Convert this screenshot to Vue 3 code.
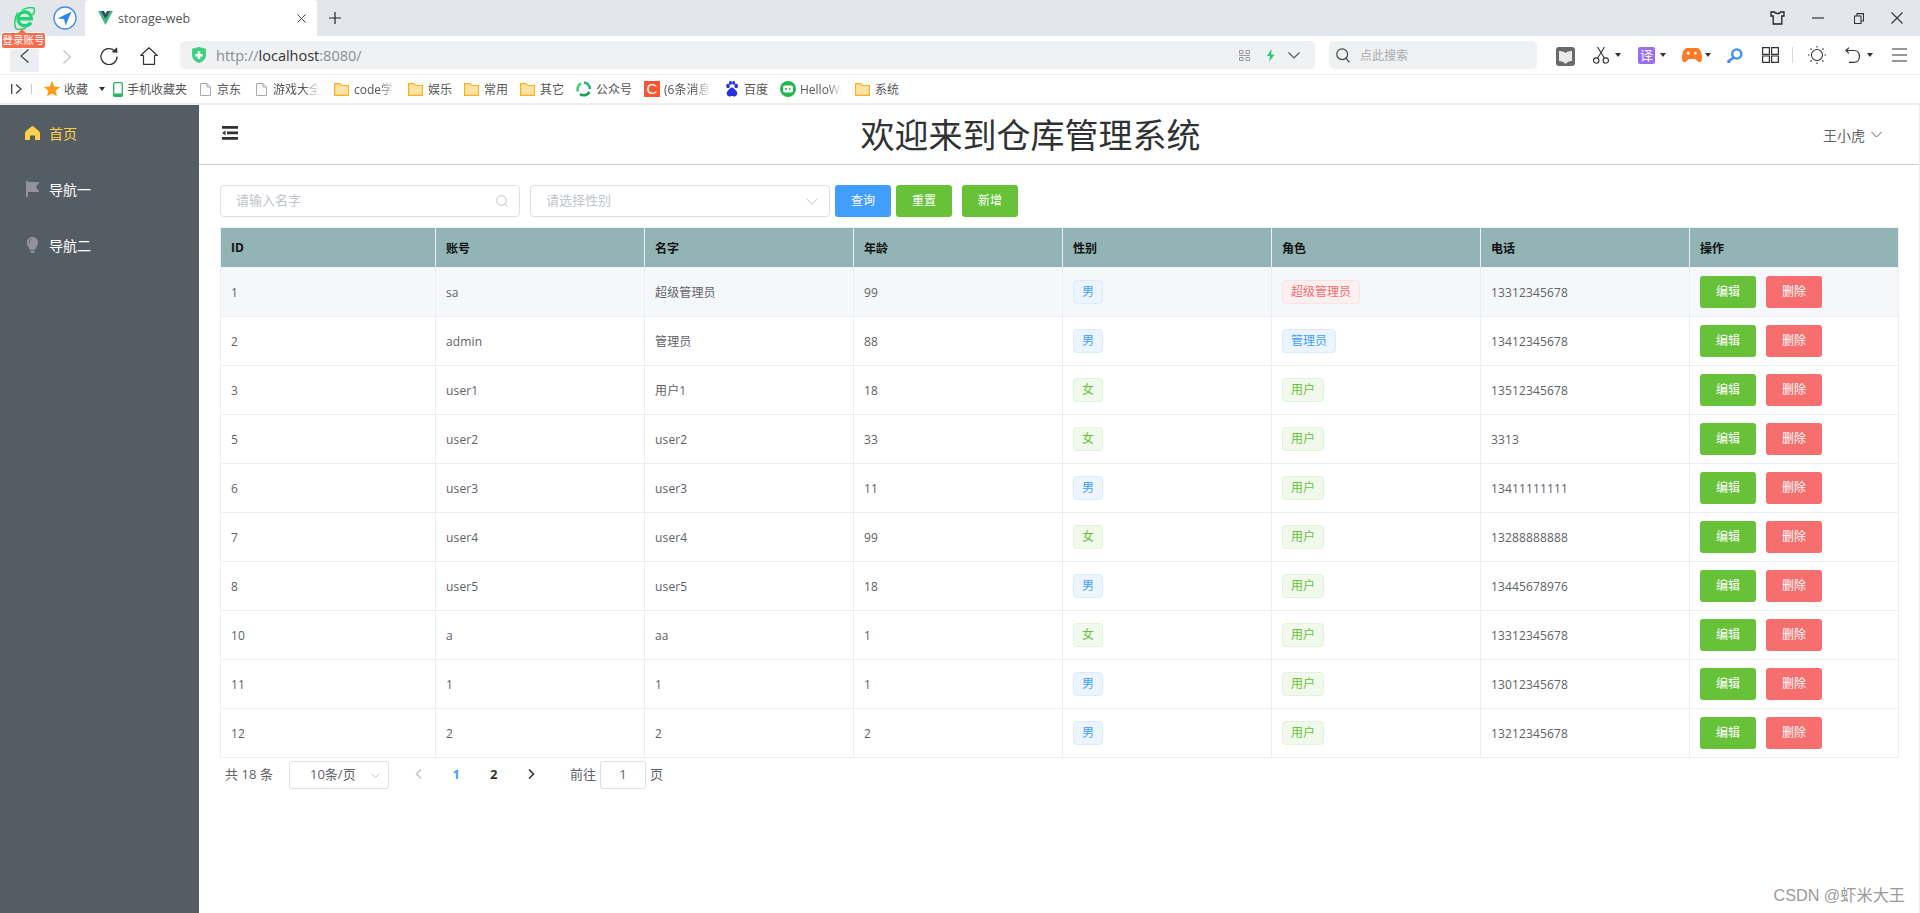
<script setup>
const bookmarks = [
  { kind: 'star', text: '收藏', w: 69, caret: true },
  { kind: 'phone', text: '手机收藏夹', w: 87 },
  { kind: 'doc', text: '京东', w: 56 },
  { kind: 'doc', text: '游戏大全', w: 78, clip: 47 },
  { kind: 'folder', text: 'code学习', w: 74, clip: 41 },
  { kind: 'folder', text: '娱乐', w: 56 },
  { kind: 'folder', text: '常用', w: 56 },
  { kind: 'folder', text: '其它', w: 56 },
  { kind: 'gzh', text: '公众号', w: 68 },
  { kind: 'csdn', text: '(6条消息', w: 81, clip: 47 },
  { kind: 'baidu', text: '百度', w: 55 },
  { kind: 'hello', text: 'HelloWorld', w: 75, clip: 42 },
  { kind: 'folder', text: '系统', w: 60 }
]
const SA = { text: '超级管理员', type: 'danger' }
const AD = { text: '管理员', type: 'primary' }
const US = { text: '用户', type: 'success' }
const rows = [
  [1, 'sa', '超级管理员', 99, '男', SA, '13312345678'],
  [2, 'admin', '管理员', 88, '男', AD, '13412345678'],
  [3, 'user1', '用户1', 18, '女', US, '13512345678'],
  [5, 'user2', 'user2', 33, '女', US, '3313'],
  [6, 'user3', 'user3', 11, '男', US, '13411111111'],
  [7, 'user4', 'user4', 99, '女', US, '13288888888'],
  [8, 'user5', 'user5', 18, '男', US, '13445678976'],
  [10, 'a', 'aa', 1, '女', US, '13312345678'],
  [11, '1', '1', 1, '男', US, '13012345678'],
  [12, '2', '2', 2, '男', US, '13212345678']
]
const columns = ['ID', '账号', '名字', '年龄', '性别', '角色', '电话', '操作']
</script>

<template>
  <div class="page">
    <div class="tabbar">
      <svg class="ie" viewBox="0 0 21 23" fill="none" stroke="#21d46f" stroke-width="3.400">
        <path d="M5 11.800H17.300C17.300 7.500 14.500 5 10.800 5C6.800 5 4 8 4 12C4 16 7 18.800 10.800 18.800C13.600 18.800 15.500 17.700 17 15.500" />
        <path d="M8 3.200C12 .8 17.500 -.2 20 1.200C21 3 20 6 18.500 8" stroke-width="1.500" />
        <path d="M3.500 5.500C.5 11 0 19 2 21.500C4 23 8 22.500 12 21" stroke-width="1.500" />
      </svg>
      <div class="login-badge">登录账号</div>
      <svg class="compass" viewBox="0 0 24 24">
        <circle cx="12" cy="12" r="11" fill="#fff" stroke="#3d8df2" stroke-width="1.3" />
        <path d="M18.500 5.500L4.500 12.500L11 13L12.500 19.500Z" fill="#2f86ee" />
      </svg>
      <div class="tab">
        <svg class="vue" viewBox="0 0 16 15">
          <path d="M0 0H6.200L8 3.200L9.800 0H16L8 15Z" fill="#41b883" />
          <path d="M3.200 0H6.200L8 3.200L9.800 0H12.800L8 8.500Z" fill="#34495e" />
        </svg>
        <span class="tab-title">storage-web</span>
        <svg class="tab-close" viewBox="0 0 9 9" fill="none" stroke="#444" stroke-width="1">
          <path d="M.5.5L8.500 8.500M8.500.5L.5 8.500" />
        </svg>
      </div>
      <svg class="plus" viewBox="0 0 12 12" fill="none" stroke="#222" stroke-width="1.2">
        <path d="M6 0V12M0 6H12" />
      </svg>
      <div class="win-controls">
        <svg class="shirt" viewBox="0 0 15 14" fill="none" stroke="#222" stroke-width="1.3">
          <path d="M4.500 1H1L1 5H3.200V13H11.800V5H14V1H10.500C10 3 5 3 4.500 1Z" />
        </svg>
        <svg class="win-min" viewBox="0 0 12 2" stroke="#333" stroke-width="1.2"><path d="M0 1H12" /></svg>
        <svg class="win-restore" viewBox="0 0 10 11" fill="none" stroke="#333" stroke-width="1.1">
          <path d="M.5 3H7V10.500H.5Z" /><path d="M3 3V.6H9.500V8H7" />
        </svg>
        <svg class="win-close" viewBox="0 0 12 12" fill="none" stroke="#333" stroke-width="1.1">
          <path d="M.5.5L11.500 11.500M11.500.5L.5 11.500" />
        </svg>
      </div>
    </div>

    <div class="toolbar">
      <div class="back">
        <svg width="9" height="14" viewBox="0 0 9 14" fill="none" stroke="#444" stroke-width="1.2"><path d="M8.500.5L1 7L8.500 13.500" /></svg>
      </div>
      <svg class="fwd" viewBox="0 0 8 14" fill="none" stroke="#c4c4c4" stroke-width="1.2"><path d="M.5.5L7.500 7L.5 13.500" /></svg>
      <svg class="reload" viewBox="0 0 18 18" fill="none" stroke="#333" stroke-width="1.3">
        <path d="M14.500 3.800A8 8 0 1 0 17 9.500" /><path d="M11.500 5.200L17.500 5.800L17 .3Z" fill="#333" stroke="none" />
      </svg>
      <svg class="home" viewBox="0 0 18 18" fill="none" stroke="#333" stroke-width="1.2" stroke-linejoin="round">
        <path d="M.7 8.500L9 .8L17.300 8.500H14.500V17.300H3.500V8.500Z" />
      </svg>
      <div class="address">
        <svg class="shield" viewBox="0 0 13 15">
          <path d="M0 1.600L6.500 0L13 1.600V8C13 11.500 9.500 14 6.500 15C3.500 14 0 11.500 0 8Z" fill="#3fd07f" />
          <path d="M5.300 4H7.700V6.500H10V8.800H7.700V11.200H5.300V8.800H3V6.500H5.300Z" fill="#fff" />
        </svg>
        <span class="url">http://<b>localhost</b>:8080/</span>
        <svg class="qr" viewBox="0 0 11 11" fill="none" stroke="#999" stroke-width="1">
          <path d="M.5.5H4V3.500H.5ZM7 .5H10.500V3.500H7ZM.5 7.500H4V10.500H.5ZM7 7.500H10.500V10.500H7ZM0 5.500H11" />
        </svg>
        <svg class="bolt" viewBox="0 0 9 13"><path d="M5.500 0L1 7H4L3 13L8.500 5.500H5.300Z" fill="#22d07a" /></svg>
        <svg class="addr-chev" viewBox="0 0 12 7" fill="none" stroke="#555" stroke-width="1.2"><path d="M.5.5L6 6L11.500.5" /></svg>
      </div>
      <div class="search">
        <svg width="14" height="15" viewBox="0 0 14 15" fill="none" stroke="#444" stroke-width="1.2">
          <circle cx="6.200" cy="6.200" r="5.400" /><path d="M10 10.200L13.400 14.400" />
        </svg>
        <span>点此搜索</span>
      </div>
      <svg class="t-book" viewBox="0 0 19 19">
        <rect width="19" height="19" rx="3" fill="#6a6a6a" />
        <path d="M3 4C5 4 8 4.500 9.500 6C11 4.500 14 4 16 4V14C13.500 14 11 15 9.500 17C8 15 5.500 14 3 14Z" fill="#e9e9e9" />
      </svg>
      <svg class="t-scissors" viewBox="0 0 16 17" fill="none" stroke="#333" stroke-width="1.1">
        <circle cx="3.200" cy="13.600" r="2.700" /><circle cx="12.800" cy="13.600" r="2.700" />
        <path d="M4.500 11.300L11.500 0M11.500 11.300L4.500 0" />
      </svg>
      <i class="caret c1"></i>
      <div class="t-trans">译</div>
      <i class="caret c2"></i>
      <svg class="t-game" viewBox="0 0 20 15">
        <path d="M5 0H15C18 0 20 5 20 10C20 14 18 15 16.500 14C15 13 14 11 12.500 11H7.500C6 11 5 13 3.500 14C2 15 0 14 0 10C0 5 2 0 5 0Z" fill="#ff7a26" />
        <path d="M4.500 5.200H8M6.250 3.500V7" stroke="#fff" stroke-width="1.300" />
        <circle cx="13.500" cy="5.200" r="1.400" fill="#fff" />
      </svg>
      <i class="caret c3"></i>
      <svg class="t-key" viewBox="0 0 17 15" fill="none" stroke="#3b8ef0" stroke-width="2.400">
        <circle cx="10.800" cy="6" r="4.600" /><path d="M7.500 9.500L1.500 14M2 13.500L4 15" />
      </svg>
      <svg class="t-grid" viewBox="0 0 17 16" fill="none" stroke="#333" stroke-width="1.200">
        <path d="M.6.6H7.400V7.400H.6ZM9.600.6H16.400V7.400H9.600ZM.6 9H7.400V15.400H.6ZM9.600 9H16.400V15.400H9.600Z" />
      </svg>
      <i class="t-div"></i>
      <svg class="t-sun" viewBox="0 0 18 18" fill="none" stroke="#333" stroke-width="1.100">
        <circle cx="9" cy="9" r="5.500" /><path d="M9 0V1.500M9 16.500V18M0 9H1.500M16.500 9H18M2.500 2.500L3.700 3.700M14.300 14.300L15.500 15.500M15.500 2.500L14.300 3.700M3.700 14.300L2.500 15.500" />
      </svg>
      <svg class="t-undo" viewBox="0 0 15 16" fill="none" stroke="#333" stroke-width="1.200">
        <path d="M1 3.500H9C12.500 3.500 14.400 6 14.400 9.500C14.400 13 12 15.400 9 15.400H4" /><path d="M4 .6L.8 3.500L4 6.400" />
      </svg>
      <i class="caret c4"></i>
      <svg class="t-menu" viewBox="0 0 15 14" stroke="#333" stroke-width="1.200"><path d="M0 1H15M0 7H15M0 13H15" /></svg>
    </div>

    <div class="bookbar">
      <svg class="bb-toggle" viewBox="0 0 11 10" fill="none" stroke="#444" stroke-width="1.300"><path d="M.7 0V10M5 .5L10 5L5 9.500" /></svg>
      <i class="bb-div"></i>
      <div v-for="b in bookmarks" :key="b.text" class="bm" :style="{ width: b.w + 'px' }">
        <svg v-if="b.kind === 'star'" class="ic-star" viewBox="0 0 16 16"><path d="M8 0L10.300 5.400L16 5.900L11.700 9.700L13 15.500L8 12.500L3 15.500L4.300 9.700L0 5.900L5.700 5.400Z" fill="#ff9a1a" /></svg>
        <svg v-else-if="b.kind === 'phone'" class="ic-phone" viewBox="0 0 10 15" fill="none">
          <rect x=".7" y=".7" width="8.600" height="13.600" rx="1" stroke="#27b45e" stroke-width="1.300" /><rect x="1" y="11.500" width="8" height="3" fill="#27b45e" />
        </svg>
        <svg v-else-if="b.kind === 'doc'" class="ic-doc" viewBox="0 0 11 13" fill="#fff" stroke="#aaa" stroke-width="1"><path d="M.5.5H7L10.500 4V12.500H.5ZM7 .5V4H10.500" /></svg>
        <svg v-else-if="b.kind === 'folder'" class="ic-folder" viewBox="0 0 15 13">
          <path d="M.6.6H6L7.500 2.500H14.400V12.400H.6Z" fill="#ffe2a6" stroke="#ffb01f" stroke-width="1.200" />
        </svg>
        <svg v-else-if="b.kind === 'gzh'" class="ic-gzh" viewBox="0 0 16 16" fill="none" stroke-width="2.600">
          <path d="M8 1.500A6.500 6.500 0 0 1 14 8" stroke="#2bb673" /><path d="M13.500 11A6.500 6.500 0 0 1 4 13" stroke="#1f9d58" /><path d="M2 10.500A6.500 6.500 0 0 1 5 2.500" stroke="#4ccb7a" />
        </svg>
        <div v-else-if="b.kind === 'csdn'" class="ic-csdn">C</div>
        <svg v-else-if="b.kind === 'baidu'" class="ic-baidu" viewBox="0 0 14 16" fill="#2932e1">
          <ellipse cx="3" cy="5" rx="1.800" ry="2.300" /><ellipse cx="5.500" cy="1.900" rx="1.600" ry="1.900" /><ellipse cx="8.700" cy="1.900" rx="1.600" ry="1.900" /><ellipse cx="11.200" cy="5" rx="1.800" ry="2.300" />
          <path d="M7 6.500C9 6.500 9.500 8.500 11 9.500C13 11 12.500 15.500 9.500 15.500C8.500 15.500 8 15 7 15C6 15 5.500 15.500 4.500 15.500C1.500 15.500 1 11 3 9.500C4.500 8.500 5 6.500 7 6.500Z" />
        </svg>
        <svg v-else-if="b.kind === 'hello'" class="ic-hello" viewBox="0 0 16 16">
          <circle cx="8" cy="8" r="8" fill="#1fb84f" /><rect x="3" y="4.500" width="10" height="7" rx="2" fill="#fff" />
          <circle cx="6" cy="8" r="1" fill="#1fb84f" /><path d="M9 6.700L11 8L9 9.300Z" fill="#1fb84f" />
        </svg>
        <span class="bm-text" :class="{ clipped: b.clip }" :style="b.clip ? { width: b.clip + 'px' } : null">{{ b.text }}</span>
        <i v-if="b.caret" class="caret bm-caret"></i>
      </div>
    </div>

    <div class="body">
      <aside class="aside">
        <div class="menu-item active">
          <svg class="menu-ic" viewBox="0 0 15 14"><path d="M7.500 0C9 1 15 5 15 7V14H10V9.500H5V14H0V7C0 5 6 1 7.500 0Z" fill="#ffd04b" /></svg>
          <span>首页</span>
        </div>
        <div class="menu-item">
          <svg class="menu-ic" viewBox="0 0 15 16"><path d="M1 0H3V16H1ZM3 1H14.500L11 6L14.500 11H3Z" fill="#909399" /></svg>
          <span>导航一</span>
        </div>
        <div class="menu-item">
          <svg class="menu-ic" viewBox="0 0 15 17">
            <path d="M7.500 0C11 0 13.500 2.800 13.500 6.200C13.500 9.500 11 11 10.500 13.500H4.500C4 11 1.500 9.500 1.500 6.200C1.500 2.800 4 0 7.500 0Z" fill="#909399" />
            <path d="M5 14.500H10L9 17H6Z" fill="#909399" /><path d="M4 7C4 4.500 5 2.800 7 2" fill="none" stroke="#5f666e" stroke-width="1" />
          </svg>
          <span>导航二</span>
        </div>
      </aside>

      <main class="main">
        <header class="header">
          <svg class="fold" viewBox="0 0 16 14">
            <path d="M0 0H16V2.800H0ZM5 5.500H16V8.300H5ZM0 11H16V13.800H0ZM3.500 4.500V9.300L0 6.900Z" fill="#2f3133" />
          </svg>
          <h1 class="title">欢迎来到仓库管理系统</h1>
          <div class="user">
            <span>王小虎</span>
            <svg width="11" height="7" viewBox="0 0 11 7" fill="none" stroke="#606266" stroke-width="1"><path d="M.5 1L5.500 6L10.500 1" /></svg>
          </div>
        </header>

        <section class="content">
          <div class="filters">
            <div class="field name-field">
              <span class="placeholder">请输入名字</span>
              <svg width="12" height="12" viewBox="0 0 12 12" fill="none" stroke="#c0c4cc" stroke-width="1"><circle cx="5.500" cy="5.500" r="4.800" /><path d="M9 9L11.500 11.500" /></svg>
            </div>
            <div class="field sex-field">
              <span class="placeholder">请选择性别</span>
              <svg width="12" height="7" viewBox="0 0 12 7" fill="none" stroke="#c0c4cc" stroke-width="1"><path d="M.5 .7L6 6.200L11.500 .7" /></svg>
            </div>
            <button class="btn primary query">查询</button>
            <button class="btn success reset">重置</button>
            <button class="btn success add">新增</button>
          </div>

          <div class="table-wrap">
            <table class="table">
              <colgroup>
                <col class="col-first" />
                <col v-for="n in 7" :key="n" class="col-rest" />
              </colgroup>
              <thead>
                <tr><th v-for="c in columns" :key="c">{{ c }}</th></tr>
              </thead>
              <tbody>
                <tr v-for="(r, i) in rows" :key="r[0]" :class="{ hover: i === 0 }">
                  <td>{{ r[0] }}</td>
                  <td>{{ r[1] }}</td>
                  <td>{{ r[2] }}</td>
                  <td>{{ r[3] }}</td>
                  <td><span class="tag" :class="r[4] === '男' ? 'primary' : 'success'">{{ r[4] }}</span></td>
                  <td><span class="tag" :class="r[5].type">{{ r[5].text }}</span></td>
                  <td>{{ r[6] }}</td>
                  <td class="ops">
                    <button class="btn success">编辑</button>
                    <button class="btn danger">删除</button>
                  </td>
                </tr>
              </tbody>
            </table>
          </div>

          <div class="pagination">
            <span class="total">共 18 条</span>
            <div class="pg-select">
              <span>10条/页</span>
              <svg width="9" height="5" viewBox="0 0 9 5" fill="none" stroke="#c0c4cc" stroke-width="1"><path d="M.5.5L4.500 4.500L8.500.5" /></svg>
            </div>
            <div class="pg-btn prev"><svg width="7" height="10" viewBox="0 0 7 10" fill="none" stroke="#c0c4cc" stroke-width="1.500"><path d="M6 .5L1.500 5L6 9.500" /></svg></div>
            <div class="pg-btn num current">1</div>
            <div class="pg-btn num">2</div>
            <div class="pg-btn"><svg width="7" height="10" viewBox="0 0 7 10" fill="none" stroke="#303133" stroke-width="1.500"><path d="M1 .5L5.500 5L1 9.500" /></svg></div>
            <span class="goto">前往</span>
            <div class="pg-input">1</div>
            <span class="pg-unit">页</span>
          </div>
        </section>
      </main>
    </div>
    <div class="watermark">CSDN @虾米大王</div>
  </div>
</template>

<style>
html, body { margin: 0; height: 100%; overflow: hidden; background: #fff; }
</style>

<style scoped>
.page {
  position: relative;
  width: 1920px;
  height: 913px;
  display: flex;
  flex-direction: column;
  overflow: hidden;
  font-family: "Open Sans", "Noto Sans CJK SC", sans-serif;
  color: #606266;
}
svg { display: block; flex: none; }
i { display: block; flex: none; }

/* tab strip */
.tabbar { height: 36px; flex: none; background: #e3e6ea; display: flex; align-items: center; position: relative; }
.ie { width: 21px; height: 23px; margin-left: 14px; margin-right: 1px; }
.login-badge {
  position: absolute; left: 2px; top: 33px; width: 43px; height: 15px; z-index: 5;
  background: #fb6c50; color: #fff; font-size: 10.500px; line-height: 14px; text-align: center;
  border-radius: 2px; box-shadow: 0 0 0 1px #fff; white-space: nowrap;
}
.login-badge::before {
  content: ""; position: absolute; left: 16px; top: -4px;
  border-left: 4px solid transparent; border-right: 4px solid transparent; border-bottom: 4px solid #fb6c50;
}
.compass { width: 24px; height: 24px; margin-left: 17px; }
.tab { width: 232px; height: 36px; margin-left: 8px; background: #fff; border-radius: 4px 4px 0 0; display: flex; align-items: center; }
.vue { width: 15px; height: 14px; margin-left: 13px; }
.tab-title { margin-left: 5px; width: 174px; font-size: 12.500px; color: #555; }
.tab-close { width: 9px; height: 9px; margin-left: 5px; }
.plus { width: 12px; height: 12px; margin-left: 12px; }
.win-controls { margin-left: auto; display: flex; align-items: center; padding-right: 17px; }
.shirt { width: 15px; height: 14px; }
.win-min { width: 12px; height: 2px; margin-left: 27px; }
.win-restore { width: 10px; height: 11px; margin-left: 30px; }
.win-close { width: 12px; height: 12px; margin-left: 27px; }

/* toolbar */
.toolbar { height: 39px; box-sizing: border-box; flex: none; background: #fff; border-bottom: 1px solid #eee; display: flex; align-items: center; }
.back { width: 29px; height: 32px; margin: 2px 0 0 10px; background: #eceef1; display: flex; align-items: center; justify-content: center; }
.fwd { width: 8px; height: 14px; margin: 3px 0 0 24px; }
.reload { width: 18px; height: 18px; margin: 2px 0 0 29px; }
.home { width: 18px; height: 18px; margin: 2px 0 0 22px; }
.address { width: 1135px; height: 28px; margin-left: 22px; background: #eff1f3; border-radius: 5px; display: flex; align-items: center; }
.shield { width: 14px; height: 16px; margin-left: 12px; }
.url { margin-left: 10px; font-size: 14.500px; color: #8a8d91; white-space: nowrap; }
.url b { font-weight: 400; color: #333; }
.qr { width: 11px; height: 11px; margin-left: auto; }
.bolt { width: 9px; height: 13px; margin-left: 16px; }
.addr-chev { width: 12px; height: 7px; margin: 0 15px 0 13px; }
.search { width: 208px; height: 28px; box-sizing: border-box; padding-left: 7px; margin-left: 14px; background: #eff1f3; border-radius: 5px; display: flex; align-items: center; gap: 10px; font-size: 12px; color: #aaa; }
.t-book { width: 19px; height: 19px; margin: 2px 0 0 19px; }
.t-scissors { width: 16px; height: 17px; margin: 1px 0 0 18px; }
.caret { width: 0; height: 0; border-left: 3px solid transparent; border-right: 3px solid transparent; border-top: 4px solid #333; }
.c1 { margin: 0 0 0 6px; }
.t-trans { width: 17px; height: 17px; margin-left: 17px; background: #9a6cf5; color: #fff; border-radius: 2px; font-size: 13px; line-height: 16px; text-align: center; }
.c2 { margin-left: 5px; }
.t-game { width: 20px; height: 15px; margin-left: 16px; }
.c3 { margin-left: 3px; }
.t-key { width: 17px; height: 15px; margin-left: 15px; }
.t-grid { width: 17px; height: 16px; margin-left: 19px; }
.t-div { width: 1px; height: 16px; margin-left: 13px; background: #d8d8d8; }
.t-sun { width: 18px; height: 18px; margin-left: 15px; }
.t-undo { width: 15px; height: 16px; margin-left: 19px; }
.c4 { margin-left: 7px; }
.t-menu { width: 15px; height: 14px; margin-left: 19px; }

/* bookmarks */
.bookbar { height: 30px; box-sizing: border-box; flex: none; background: #fff; border-bottom: 2px solid #eee; display: flex; align-items: center; font-size: 12px; color: #555; }
.bb-toggle { width: 11px; height: 10px; margin-left: 11px; }
.bb-div { width: 1px; height: 10px; margin: 0 12px 0 9px; background: #ccc; }
.bm { display: flex; align-items: center; flex: none; white-space: nowrap; }
.bm-text { display: block; margin-left: 4px; overflow: hidden; }
.clipped { -webkit-mask-image: linear-gradient(to right, #000 65%, transparent); mask-image: linear-gradient(to right, #000 65%, transparent); }
.ic-star { width: 16px; height: 16px; }
.ic-phone { width: 10px; height: 15px; }
.ic-doc { width: 11px; height: 13px; margin-right: 2px; }
.ic-folder { width: 15px; height: 13px; margin-right: 1px; }
.ic-gzh { width: 16px; height: 16px; }
.ic-csdn { width: 16px; height: 16px; background: #fc5531; color: #fff; font-size: 15px; line-height: 16px; text-align: center; font-family: "Liberation Sans", sans-serif; }
.ic-baidu { width: 14px; height: 16px; margin-right: 1px; }
.ic-hello { width: 16px; height: 16px; }
.bm-caret { margin-left: 11px; }

/* app */
.body { flex: 1; display: flex; min-height: 0; }
.aside { width: 199px; flex: none; background: #545c64; }
.menu-item { height: 56px; display: flex; align-items: center; padding-left: 25px; font-size: 14px; color: #fff; }
.menu-item.active { color: #ffd04b; }
.menu-ic { width: 15px; height: 16px; margin-right: 9px; }
.main { flex: 1; min-width: 0; display: flex; flex-direction: column; border-right: 1px solid #eee; }
.header { height: 60px; box-sizing: border-box; flex: none; border-bottom: 1px solid #ccc; display: flex; align-items: center; padding: 0 37px 0 23px; }
.fold { width: 16px; height: 14px; margin-top: -3px; }
.title { flex: 1; margin: 0; text-align: center; font-size: 34px; font-weight: 400; color: #303133; line-height: 60px; }
.user { display: flex; align-items: center; gap: 6px; font-size: 14px; color: #606266; }
.content { padding: 20px 20px 0 21px; }
.filters { display: flex; align-items: center; height: 32px; }
.field { width: 300px; height: 32px; box-sizing: border-box; border: 1px solid #dcdfe6; border-radius: 4px; display: flex; align-items: center; justify-content: space-between; padding: 0 11px 0 15px; font-size: 13px; }
.sex-field { margin-left: 10px; }
.placeholder { color: #c0c4cc; margin-top: -3px; }
.btn { width: 56px; height: 32px; padding: 0 0 2px; border: 0; border-radius: 3px; color: #fff; font: inherit; font-size: 12px; flex: none; }
.primary.btn { background: #409eff; }
.success.btn { background: #67c23a; }
.danger.btn { background: #f76e6e; }
.query { margin-left: 5px; }
.reset { margin-left: 5px; }
.add { margin-left: 10px; }
.table-wrap { margin-top: 10px; width: 1678px; box-sizing: border-box; border-left: 1px solid #ebeef5; }
.table { width: 1677px; table-layout: fixed; border-collapse: separate; border-spacing: 0; font-size: 12px; }
.col-first { width: 215px; }
.col-rest { width: 209px; }
th { height: 41px; box-sizing: border-box; padding: 0 10px; text-align: left; background: #93b4b5; color: #111; font-weight: 700; border-top: 1px solid #ebeef5; border-bottom: 1px solid #f0f2f6; border-right: 1px solid #ebeef5; }
td { height: 49px; box-sizing: border-box; padding: 0 10px; border-bottom: 1px solid #ebeef5; border-right: 1px solid #ebeef5; color: #606266; letter-spacing: .15px; }
.hover td { background: #f5f7fa; }
.ops .btn + .btn { margin-left: 10px; }
.tag { display: inline-block; height: 24px; box-sizing: border-box; padding: 0 8px; line-height: 22px; border: 1px solid; border-radius: 4px; font-size: 12px; letter-spacing: 0; vertical-align: middle; }
.tag.primary { background: #ecf5ff; border-color: #d9ecff; color: #409eff; }
.tag.success { background: #f0f9eb; border-color: #e1f3d8; color: #67c23a; }
.tag.danger { background: #fef0f0; border-color: #fde2e2; color: #f56c6c; }
.pagination { display: flex; align-items: center; height: 28px; margin-top: 3px; padding-left: 5px; font-size: 13px; color: #606266; }
.total { width: 49px; white-space: nowrap; margin-top: -4px; letter-spacing: .1px; }
.pg-select { width: 100px; height: 28px; margin-left: 15px; box-sizing: border-box; border: 1px solid #dcdfe6; border-radius: 3px; display: flex; align-items: center; justify-content: space-between; padding: 0 8px 0 20px; }
.pg-select span { margin-top: -4px; }
.pg-btn { width: 37.500px; height: 28px; display: flex; align-items: center; justify-content: center; color: #303133; padding-bottom: 3px; box-sizing: border-box; }
.prev { margin-left: 11px; }
.num { font-weight: 700; }
.current { color: #409eff; }
.goto { margin-left: 20px; width: 26px; white-space: nowrap; margin-top: -4px; }
.pg-input { width: 46px; height: 28px; margin-left: 4px; box-sizing: border-box; border: 1px solid #dcdfe6; border-radius: 3px; text-align: center; line-height: 24px; }
.pg-unit { margin-left: 4px; margin-top: -4px; }
.watermark { position: absolute; right: 15px; top: 885px; font-size: 16.200px; line-height: 20px; color: #9a9a9a; font-family: "Liberation Sans", "Noto Sans CJK SC", sans-serif; }
</style>
